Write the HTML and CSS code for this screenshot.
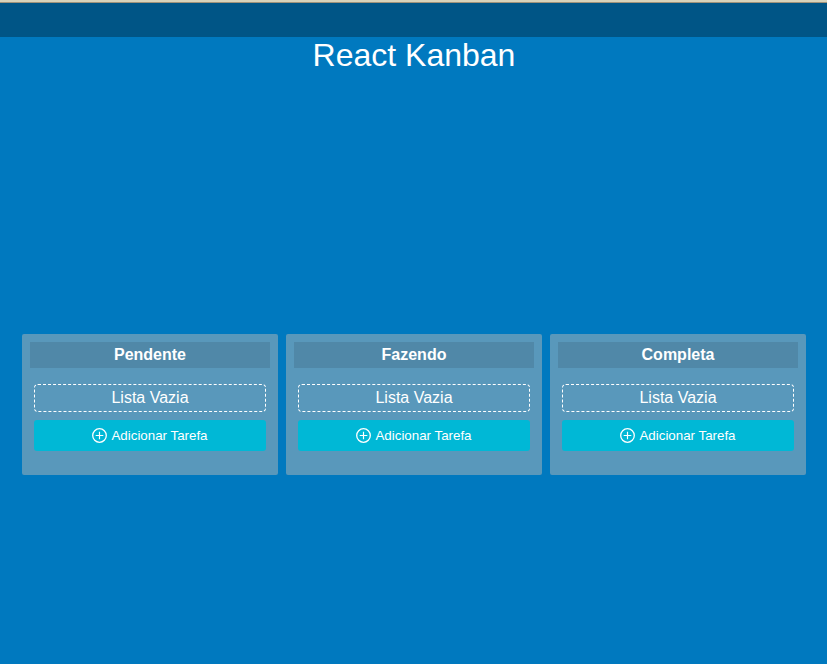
FILE: index.html
```
<!DOCTYPE html>
<html lang="pt-BR">
<head>
<meta charset="utf-8">
<title>React Kanban</title>
<link rel="stylesheet" href="styles.css">
</head>
<body>
<div class="strip"></div>
<header class="topbar"></header>
<h1 class="title">React Kanban</h1>
<main class="board">
  <section class="list">
    <h2 class="list-title">Pendente</h2>
    <div class="empty">Lista Vazia</div>
    <button class="add"><svg class="icon" viewBox="0 0 15 15"><circle cx="7.5" cy="7.5" r="6.8"/><path d="M7.5 3.7v7.6M3.7 7.5h7.6"/></svg>Adicionar Tarefa</button>
  </section>
  <section class="list">
    <h2 class="list-title">Fazendo</h2>
    <div class="empty">Lista Vazia</div>
    <button class="add"><svg class="icon" viewBox="0 0 15 15"><circle cx="7.5" cy="7.5" r="6.8"/><path d="M7.5 3.7v7.6M3.7 7.5h7.6"/></svg>Adicionar Tarefa</button>
  </section>
  <section class="list">
    <h2 class="list-title">Completa</h2>
    <div class="empty">Lista Vazia</div>
    <button class="add"><svg class="icon" viewBox="0 0 15 15"><circle cx="7.5" cy="7.5" r="6.8"/><path d="M7.5 3.7v7.6M3.7 7.5h7.6"/></svg>Adicionar Tarefa</button>
  </section>
</main>
</body>
</html>
```
FILE: styles.css
```
* { box-sizing: border-box; }
body {
  margin: 0;
  height: 664px;
  overflow: hidden;
  background: #0079bf;
  color: #fff;
  font-family: "Liberation Sans", Arial, sans-serif;
  font-size: 16px;
}
.strip {
  height: 3px;
  background: #d9d3ba;
  border-bottom: 1px solid #a0937b;
}
.topbar {
  height: 34px;
  background: #005586;
}
.title {
  margin: 0;
  font-size: 32px;
  font-weight: 400;
  line-height: 36px;
  text-align: center;
  padding-left: 1px;
}
.board {
  display: flex;
  gap: 8px;
  margin: 261px 0 0 22px;
}
.list {
  width: 256px;
  height: 141px;
  padding: 8px;
  border-radius: 2px;
  background: #5998bb;
}
.list-title {
  margin: 0 0 16px;
  height: 26px;
  font-size: 16px;
  line-height: 25px;
  text-align: center;
  background: #5088a8;
}
.empty {
  margin: 0 4px 8px;
  height: 28px;
  border: 1px dashed #fff;
  border-radius: 4px;
  line-height: 26px;
  text-align: center;
}
.add {
  display: flex;
  align-items: center;
  justify-content: center;
  gap: 4.5px;
  width: 232px;
  height: 31px;
  margin: 0 4px;
  padding: 0 0.5px 0 0;
  border: 0;
  border-radius: 3px;
  background: #00b8d6;
  color: #fff;
  font: 13.333px "Liberation Sans", Arial, sans-serif;
}
.icon {
  width: 15px;
  height: 15px;
  fill: none;
  stroke: #fff;
  stroke-width: 1.3;
}
.icon path {
  stroke-width: 1.15;
}
```
